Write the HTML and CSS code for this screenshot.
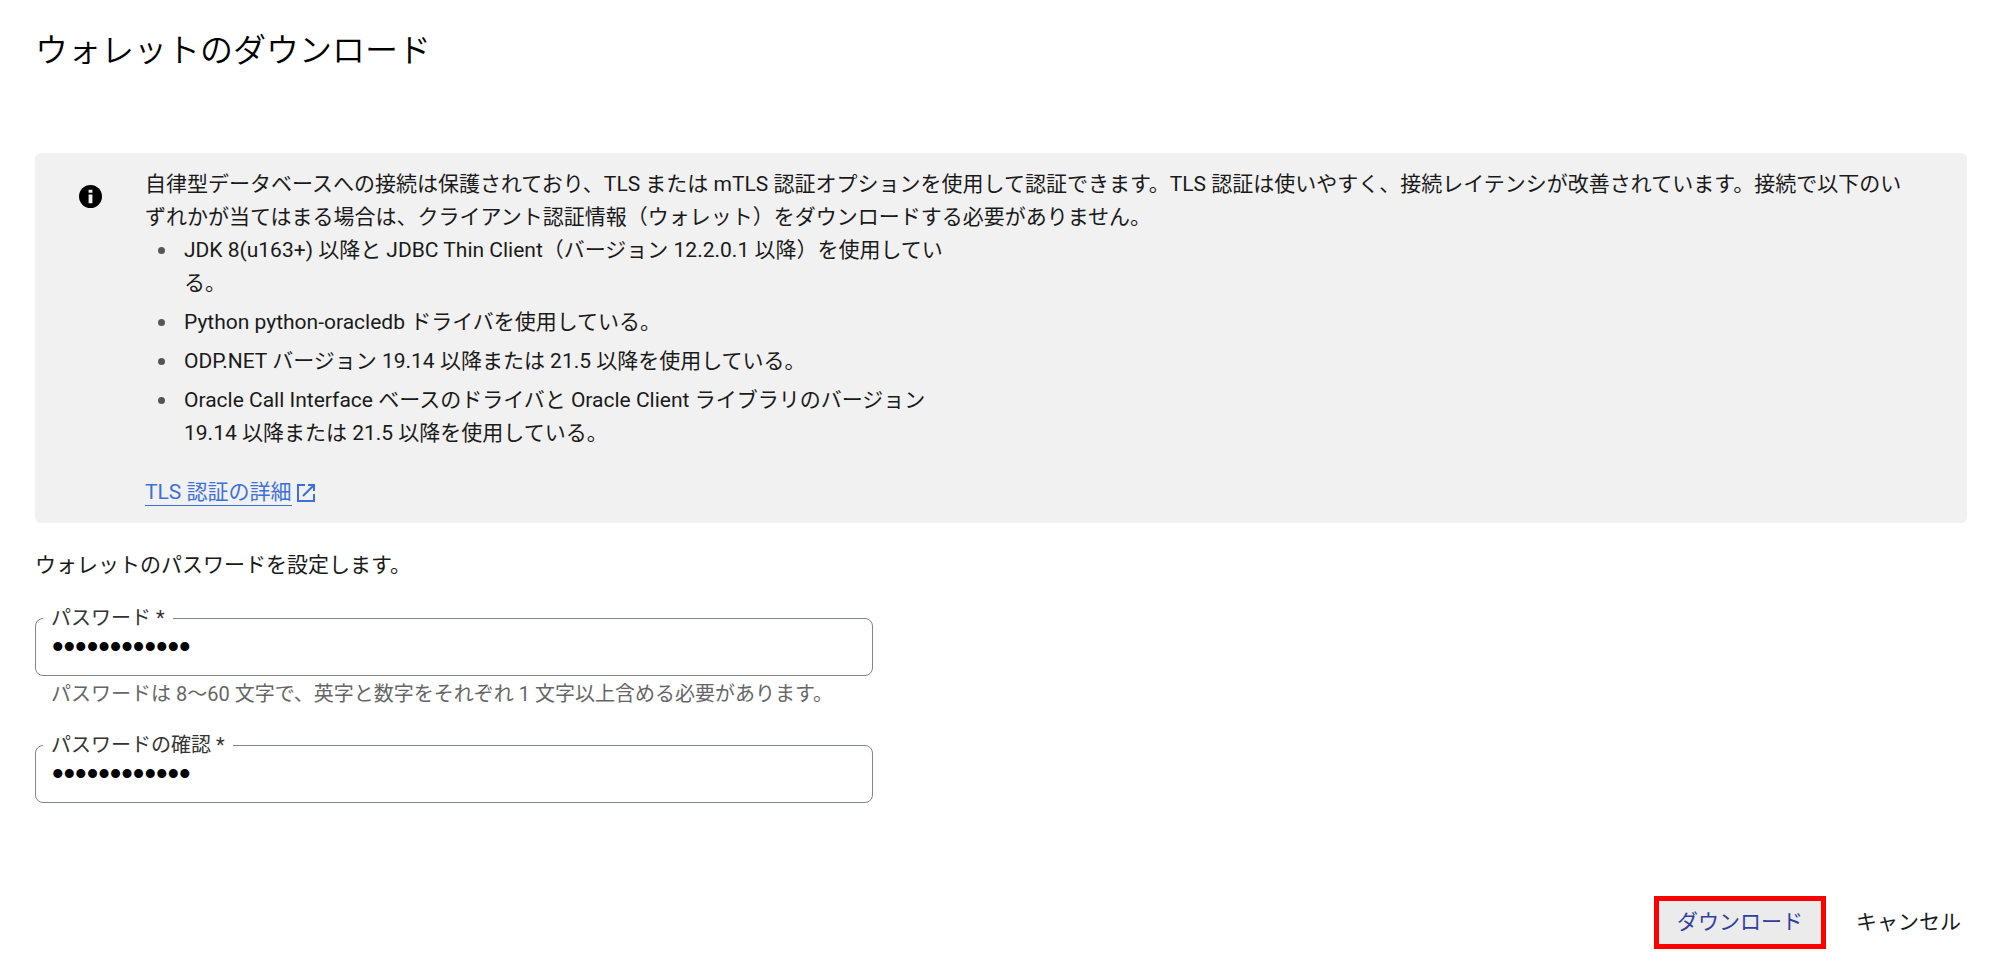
FILE: index.html
```
<!DOCTYPE html>
<html lang="ja">
<head>
    <meta charset="UTF-8">
    <meta name="viewport" content="width=device-width, initial-scale=1.0">
    <title>ウォレットのダウンロード</title>
    <link rel="stylesheet" href="styles.css">
</head>
<body>
    <h1>ウォレットのダウンロード</h1>

    <section class="info-box">
        <svg class="info-icon" viewBox="0 0 24 24" aria-hidden="true">
            <circle cx="12" cy="12" r="12" fill="#000"/>
            <path d="M10 5h4v3h-4zM10 10h4v9h-4z" fill="#f1f1f1"/>
        </svg>
        <div class="info-content">
            <p>自律型データベースへの接続は保護されており、TLS または mTLS 認証オプションを使用して認証できます。TLS 認証は使いやすく、接続レイテンシが改善されています。接続で以下のいずれかが当てはまる場合は、クライアント認証情報（ウォレット）をダウンロードする必要がありません。</p>
            <ul class="driver-list">
                <li>JDK 8(u163+) 以降と JDBC Thin Client（バージョン 12.2.0.1 以降）を使用している。</li>
                <li>Python python-oracledb ドライバを使用している。</li>
                <li>ODP.NET バージョン 19.14 以降または 21.5 以降を使用している。</li>
                <li>Oracle Call Interface ベースのドライバと Oracle Client ライブラリのバージョン 19.14 以降または 21.5 以降を使用している。</li>
            </ul>
            <a class="learn-more" href="#">
                <span>TLS 認証の詳細</span>
                <svg class="link-icon" viewBox="0 0 18 18" aria-hidden="true">
                    <path d="M8 1H1v16h16v-7M11 1h6v6M17 1L6 12" fill="none" stroke="currentColor" stroke-width="2"/>
                </svg>
            </a>
        </div>
    </section>

    <form class="wallet-form">
        <p>ウォレットのパスワードを設定します。</p>
        <div class="field">
            <label for="password">パスワード *</label>
            <input type="password" id="password" value="wallet123456" aria-describedby="password-hint">
        </div>
        <p class="hint" id="password-hint">パスワードは 8～60 文字で、英字と数字をそれぞれ 1 文字以上含める必要があります。</p>
        <div class="field">
            <label for="confirm">パスワードの確認 *</label>
            <input type="password" id="confirm" value="wallet123456">
        </div>
        <div class="actions">
            <button type="submit" class="btn btn-download">ダウンロード</button>
            <button type="button" class="btn">キャンセル</button>
        </div>
    </form>
</body>
</html>
```

FILE: styles.css
```
* {
    box-sizing: border-box;
}
body {
    margin: 0;
    padding: 25px 33px 20px 35px;
    background-color: #fff;
    color: #1a1a1a;
    font-family: Roboto, "Noto Sans CJK JP", sans-serif;
    font-size: 21px;
    line-height: 33px;
}
h1 {
    margin: 0 0 76px;
    color: #000;
    font-size: 33px;
    font-weight: 350;
    line-height: 52px;
}
p {
    margin: 0;
}

/* Info banner */
.info-box {
    display: flex;
    gap: 43px;
    padding: 15px 52px 14px 44px;
    background-color: #f1f1f1;
    border-radius: 6px;
}
.info-icon {
    flex: none;
    width: 23px;
    height: 23px;
    margin-top: 17px;
}
.info-content {
    flex: 1;
}
.driver-list {
    max-width: 820px;
    margin: 0 0 26px;
    padding-left: 13px;
    list-style: none;
}
.driver-list li {
    display: flex;
    gap: 19px;
}
.driver-list li + li {
    margin-top: 6px;
}
.driver-list li::before {
    content: "";
    flex: none;
    width: 7px;
    height: 7px;
    margin-top: 13px;
    border-radius: 50%;
    background-color: #555;
}
.learn-more {
    display: inline-flex;
    align-items: center;
    gap: 5px;
    color: #3d70dc;
    text-decoration: none;
}
.learn-more span {
    line-height: 26px;
    border-bottom: 1px solid #3d70dc;
}
.link-icon {
    width: 18px;
    height: 18px;
}

/* Password form */
.wallet-form {
    padding-top: 26px;
}
.field {
    position: relative;
    max-width: 838px;
    margin-top: 36px;
}
.field label {
    position: absolute;
    top: -14px;
    left: 8px;
    padding: 0 8px;
    background-color: #fff;
    color: #333;
    font-size: 20px;
    line-height: 28px;
}
.field input {
    display: block;
    width: 100%;
    height: 58px;
    padding: 0 16px;
    border: 1px solid #80868b;
    border-radius: 8px;
    background-color: #fff;
    color: #000;
    font-family: "Liberation Sans", sans-serif;
    font-size: 33px;
}
.hint {
    margin-bottom: -2px;
    padding: 2px 16px 0;
    color: #666;
    font-size: 20px;
}

/* Buttons */
.actions {
    display: flex;
    justify-content: flex-end;
    gap: 12px;
    margin-top: 93px;
}
.btn {
    padding: 5px 6px 5px 18px;
    border: 5px solid transparent;
    border-width: 5px 0;
    background: none;
    color: #1a1a1a;
    font: inherit;
    cursor: pointer;
}
.btn-download {
    padding: 5px 18px;
    border: 5px solid #f00;
    background-color: #ebebeb;
    color: #303f9f;
}
```
